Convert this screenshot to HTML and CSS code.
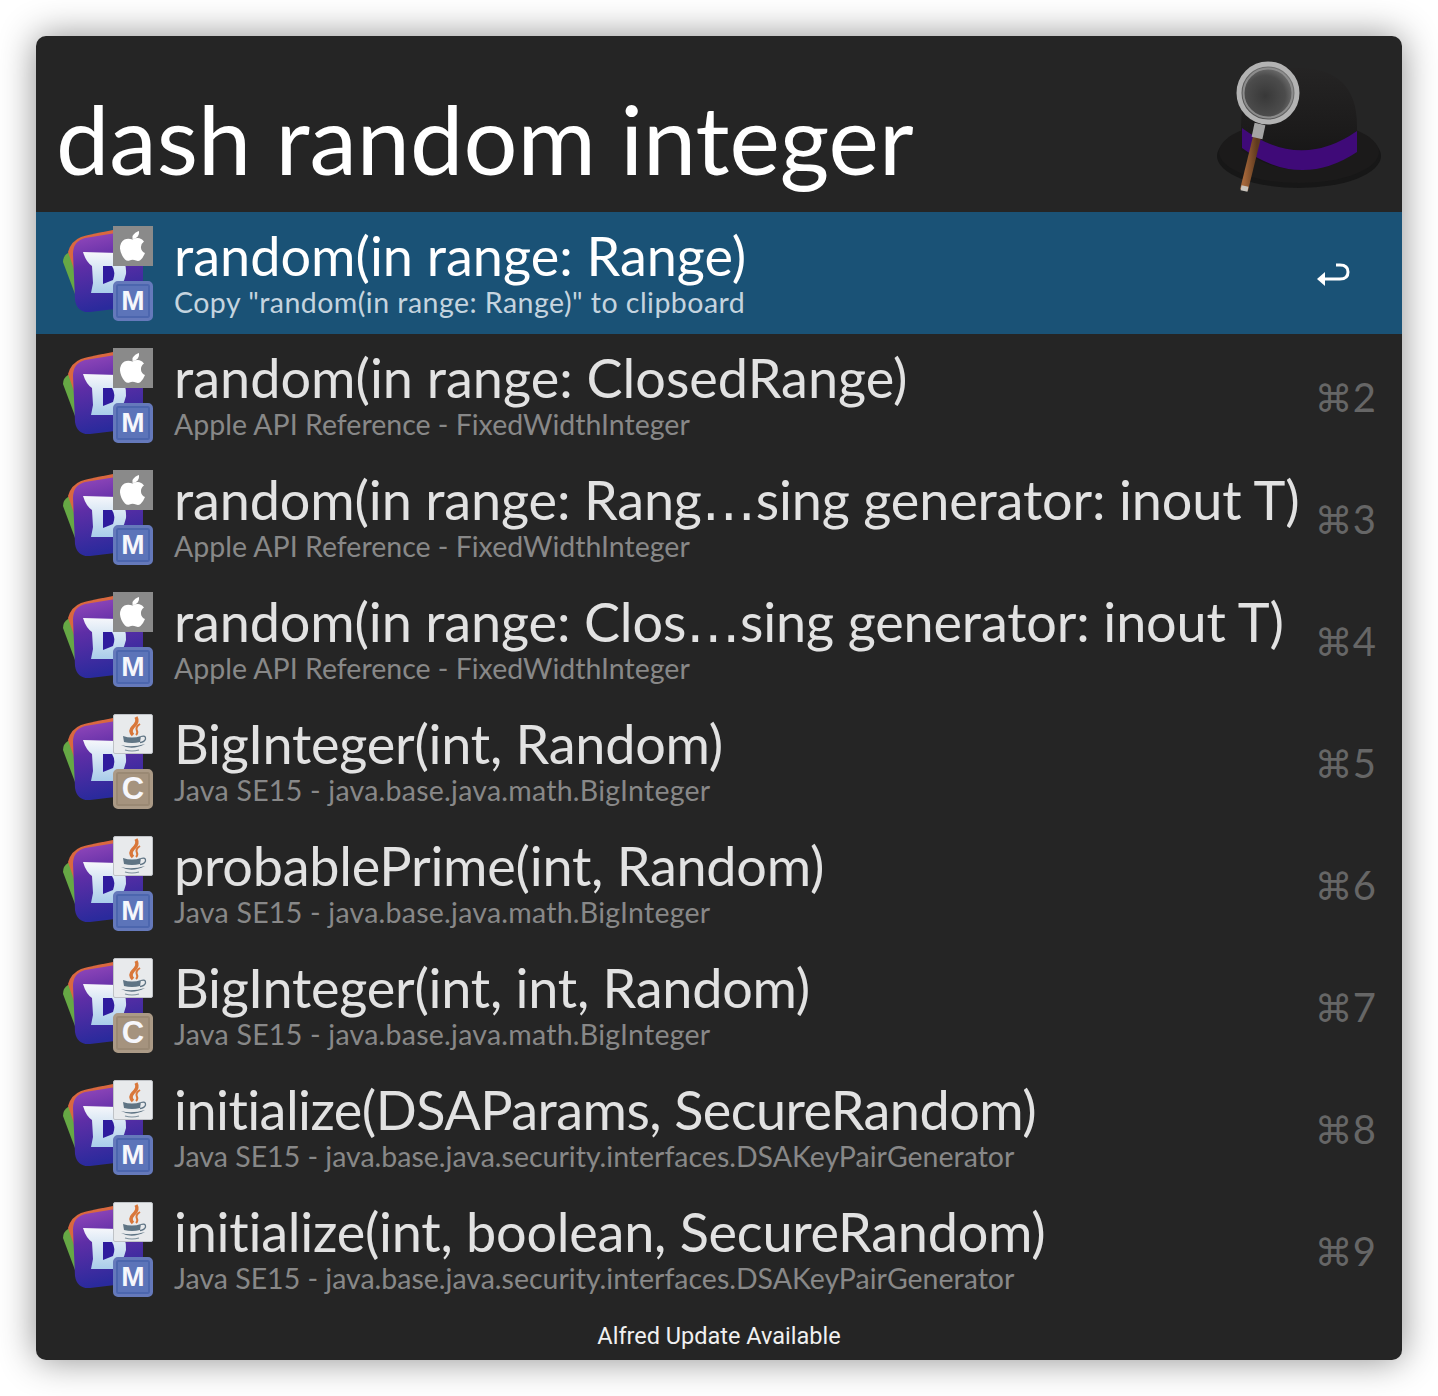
FILE: index.html
```html
<html>
  <head>
    <title>Alfred</title>
    <link rel="stylesheet" href="styles.css">
  </head>
  <body>
    <svg class="defs" width="0" height="0">
      <defs>
        <linearGradient id="dashBody" x1="0" y1="0" x2="0.2" y2="1">
          <stop offset="0" stop-color="#9a4bbd" />
          <stop offset="0.45" stop-color="#5e2ea6" />
          <stop offset="1" stop-color="#2a2a9c" />
        </linearGradient>
        <linearGradient id="dashLetter" x1="0" y1="0" x2="0" y2="1">
          <stop offset="0" stop-color="#f6f7fb" />
          <stop offset="1" stop-color="#a9cdea" />
        </linearGradient>
        <linearGradient id="crown" x1="0" y1="0" x2="0" y2="1">
          <stop offset="0" stop-color="#252424" />
          <stop offset="0.6" stop-color="#1c1b1b" />
          <stop offset="1" stop-color="#141414" />
        </linearGradient>
        <linearGradient id="stick" x1="0" y1="0" x2="1" y2="0">
          <stop offset="0" stop-color="#a5673a" />
          <stop offset="1" stop-color="#5f3a1e" />
        </linearGradient>
        <radialGradient id="lens" cx="0.45" cy="0.55" r="0.6">
          <stop offset="0" stop-color="#383838" />
          <stop offset="0.6" stop-color="#4c4c4c" />
          <stop offset="1" stop-color="#808080" />
        </radialGradient>
        <symbol id="dash" viewBox="0 0 96 96">
          <path d="M3 40 Q3 34 8 31 L20 26 L26 78 Q18 78 15 72 Z" fill="#66a845" />
          <path d="M8 30 Q11 19 21 15 Q27 13 53 8 L60 30 L15 50 Z" fill="#d9683f" />
          <path d="M13 32 Q13 19 25 16 L68 9 Q83 7 83 20 L83 74 Q83 85 72 85 L30 90 Q17 91 15 78 Z" fill="url(#dashBody)" />
          <path d="M23 30 L58 31 Q67 40 66 52 Q63 66 53 71 L31 71 L33 61 L32 44 Q26 40 23 30 Z" fill="url(#dashLetter)" />
          <path d="M43 44 L52 44 Q56 50 53 58 L43 62 Z" fill="#2f1c9e" />
        </symbol>
        <symbol id="badgeApple" viewBox="0 0 40 40">
          <rect width="40" height="40" fill="#8a8a8a" />
          <path d="M19.5 10 Q22 6 26 5 Q26.5 9 23.5 11.5 Q21.5 13 19.5 13 Z" fill="#fff" />
          <path d="M19.5 13.5 Q23 11.5 26.5 12.2 Q29.5 13 31 15.5 Q27.5 18 28 22 Q28.5 25.5 32 27 Q30 32 27.5 34 Q25.5 35.5 23 34.5 Q19.5 33.2 16.5 34.5 Q14 35.5 12 33.5 Q7.5 28.5 7 22.5 Q7 16 11.5 13.5 Q15 11.8 19.5 13.5 Z" fill="#fff" />
        </symbol>
        <symbol id="badgeJava" viewBox="0 0 40 40">
          <rect x="0.5" y="0.5" width="39" height="39" rx="1.5" fill="#e8eaec" stroke="#bfc2c6" />
          <path d="M23 3 Q26 8 20 13 Q16 17 20 21" fill="none" stroke="#d9773a" stroke-width="3.4" />
          <path d="M27 10 Q22 13 24 17 Q25 19 23 21" fill="none" stroke="#d9773a" stroke-width="2" />
          <path d="M10 22 Q19 25 28 22 L27 28 Q19 30 11 28 Z" fill="#5f7484" />
          <path d="M28 22.5 Q33 21 32.5 25 Q31.5 28 27 28.5" fill="none" stroke="#5f7484" stroke-width="1.3" />
          <path d="M8 31 Q19 34 32 30 Q19 37 8 31 Z" fill="#5f7484" />
          <path d="M12 36 Q19 38 26 36" fill="none" stroke="#7d8f9c" stroke-width="1.2" />
        </symbol>
      </defs>
    </svg>

    <div class="window">
      <div class="search">
        <div class="query">dash random integer</div>
        <svg class="hat" viewBox="0 0 200 150">
          <ellipse cx="99" cy="106" rx="82" ry="32" fill="#171717" />
          <ellipse cx="99" cy="102" rx="80" ry="31" fill="#1b1a1a" />
          <path d="M41 78 Q40 18 98 18 Q157 18 157 76 L157 100 Q100 140 41 100 Z" fill="url(#crown)" />
          <path d="M42 78 Q100 121 157 81 L157 102 Q100 140 42 98 Z" fill="#3f0a78" />
          <path d="M57 87 L44 140" stroke="url(#stick)" stroke-width="8" />
          <path d="M45 136 L44 141" stroke="#c9c4bd" stroke-width="7" />
          <path d="M60 74 L57 88" stroke="#a4a4a4" stroke-width="11" />
          <circle cx="68" cy="43" r="28" fill="url(#lens)" />
          <circle cx="68" cy="43" r="29" fill="none" stroke="#b3b3b3" stroke-width="5" />
          <circle cx="68" cy="43" r="24.5" fill="none" stroke="#8c8c8c" stroke-width="2" />
        </svg>
      </div>

      <div class="row selected">
        <div class="icon">
          <svg class="dash"><use href="#dash" /></svg>
          <svg class="badge top"><use href="#badgeApple" /></svg>
          <span class="badge bottom method">M</span>
        </div>
        <div class="texts">
          <div class="name">random(in range: Range)</div>
          <div class="sub">Copy "random(in range: Range)" to clipboard</div>
        </div>
        <svg class="enter" viewBox="0 0 36 30">
          <path d="M20 3 H24 Q32 3 32 10 Q32 17 24 17 H7" fill="none" stroke="#fff" stroke-width="3" />
          <path d="M1 17 L9 10 V24 Z" fill="#fff" />
        </svg>
      </div>

      <div class="row">
        <div class="icon">
          <svg class="dash"><use href="#dash" /></svg>
          <svg class="badge top"><use href="#badgeApple" /></svg>
          <span class="badge bottom method">M</span>
        </div>
        <div class="texts">
          <div class="name">random(in range: ClosedRange)</div>
          <div class="sub">Apple API Reference - FixedWidthInteger</div>
        </div>
        <div class="shortcut"><span class="cmd">⌘</span>2</div>
      </div>

      <div class="row">
        <div class="icon">
          <svg class="dash"><use href="#dash" /></svg>
          <svg class="badge top"><use href="#badgeApple" /></svg>
          <span class="badge bottom method">M</span>
        </div>
        <div class="texts">
          <div class="name clipped">random(in range: Rang<span class="dots">…</span>sing generator: inout T)</div>
          <div class="sub">Apple API Reference - FixedWidthInteger</div>
        </div>
        <div class="shortcut"><span class="cmd">⌘</span>3</div>
      </div>

      <div class="row">
        <div class="icon">
          <svg class="dash"><use href="#dash" /></svg>
          <svg class="badge top"><use href="#badgeApple" /></svg>
          <span class="badge bottom method">M</span>
        </div>
        <div class="texts">
          <div class="name clipped">random(in range: Clos<span class="dots">…</span>sing generator: inout T)</div>
          <div class="sub">Apple API Reference - FixedWidthInteger</div>
        </div>
        <div class="shortcut"><span class="cmd">⌘</span>4</div>
      </div>

      <div class="row java">
        <div class="icon">
          <svg class="dash"><use href="#dash" /></svg>
          <svg class="badge top"><use href="#badgeJava" /></svg>
          <span class="badge bottom ctor">C</span>
        </div>
        <div class="texts">
          <div class="name">BigInteger(int, Random)</div>
          <div class="sub wide">Java SE15 - java.base.java.math.BigInteger</div>
        </div>
        <div class="shortcut"><span class="cmd">⌘</span>5</div>
      </div>

      <div class="row java">
        <div class="icon">
          <svg class="dash"><use href="#dash" /></svg>
          <svg class="badge top"><use href="#badgeJava" /></svg>
          <span class="badge bottom method">M</span>
        </div>
        <div class="texts">
          <div class="name">probablePrime(int, Random)</div>
          <div class="sub wide">Java SE15 - java.base.java.math.BigInteger</div>
        </div>
        <div class="shortcut"><span class="cmd">⌘</span>6</div>
      </div>

      <div class="row java">
        <div class="icon">
          <svg class="dash"><use href="#dash" /></svg>
          <svg class="badge top"><use href="#badgeJava" /></svg>
          <span class="badge bottom ctor">C</span>
        </div>
        <div class="texts">
          <div class="name">BigInteger(int, int, Random)</div>
          <div class="sub wide">Java SE15 - java.base.java.math.BigInteger</div>
        </div>
        <div class="shortcut"><span class="cmd">⌘</span>7</div>
      </div>

      <div class="row java">
        <div class="icon">
          <svg class="dash"><use href="#dash" /></svg>
          <svg class="badge top"><use href="#badgeJava" /></svg>
          <span class="badge bottom method">M</span>
        </div>
        <div class="texts">
          <div class="name tight">initialize(DSAParams, SecureRandom)</div>
          <div class="sub">Java SE15 - java.base.java.security.interfaces.DSAKeyPairGenerator</div>
        </div>
        <div class="shortcut"><span class="cmd">⌘</span>8</div>
      </div>

      <div class="row java">
        <div class="icon">
          <svg class="dash"><use href="#dash" /></svg>
          <svg class="badge top"><use href="#badgeJava" /></svg>
          <span class="badge bottom method">M</span>
        </div>
        <div class="texts">
          <div class="name">initialize(int, boolean, SecureRandom)</div>
          <div class="sub">Java SE15 - java.base.java.security.interfaces.DSAKeyPairGenerator</div>
        </div>
        <div class="shortcut"><span class="cmd">⌘</span>9</div>
      </div>

      <div class="footer">Alfred Update Available</div>
    </div>
  </body>
</html>
```

FILE: styles.css
```css
html,
body {
  margin: 0;
  background: #ffffff;
}

body {
  padding: 36px;
  font-family: "Lato", "Open Sans", sans-serif;
}

.defs {
  position: absolute;
}

.window {
  width: 1366px;
  height: 1324px;
  background: #252525;
  border-radius: 10px;
  box-shadow: 0 0 36px rgba(0, 0, 0, 0.45);
  overflow: hidden;
}

.search {
  height: 176px;
  display: flex;
  justify-content: space-between;
  padding: 14px 2px 0 20px;
  box-sizing: border-box;
}

.query {
  font-size: 95.3px;
  line-height: 176px;
  margin-top: 0;
  color: #ffffff;
  white-space: nowrap;
}

.hat {
  width: 200px;
  height: 150px;
}

.row {
  height: 122px;
  display: flex;
  align-items: center;
  padding: 0 26px 0 24px;
  box-sizing: border-box;
  color: #e2e2e2;
}

.selected {
  background: #1a5276;
  color: #ffffff;
}

.icon {
  position: relative;
  width: 96px;
  height: 96px;
  flex: none;
}

.dash {
  width: 96px;
  height: 96px;
  margin-top: -3px;
}

.badge {
  position: absolute;
  left: 53px;
  width: 40px;
  height: 40px;
}

.badge.top {
  top: 1px;
}

.badge.bottom {
  top: 56px;
  box-sizing: border-box;
  border-radius: 5px;
  border-width: 3px;
  border-style: solid;
  text-align: center;
  font-size: 28px;
  font-weight: bold;
  line-height: 34px;
  color: #f6f7fc;
  font-family: "Liberation Sans", sans-serif;
}

.badge.method {
  background: #5c74b9;
  border-color: #6579bb;
  box-shadow: inset 0 0 0 2px #4c66ae;
}

.badge.ctor {
  background: #a5937e;
  border-color: #ab9a86;
  box-shadow: inset 0 0 0 2px #9a8974;
  font-size: 31px;
}

.texts {
  flex: 1;
  min-width: 0;
  margin-left: 18px;
  margin-top: 4px;
}

.name {
  font-size: 54px;
  line-height: 62px;
  height: 62px;
  margin-top: -8px;
  white-space: nowrap;
}

.clipped {
  letter-spacing: -0.15px;
}

.dots {
  font-family: "DejaVu Sans", sans-serif;
  line-height: 1;
}

.java .name {
  letter-spacing: -0.24px;
}

.java .tight {
  letter-spacing: -0.55px;
}

.sub {
  font-size: 28.5px;
  line-height: 30px;
  color: #888888;
  white-space: nowrap;
}

.wide {
  letter-spacing: 0.25px;
}

.selected .sub {
  color: #c5d4df;
  letter-spacing: 0.47px;
}

.shortcut {
  font-size: 40px;
  color: #666666;
  white-space: nowrap;
  margin-top: 4px;
}

.cmd {
  font-family: "DejaVu Sans", sans-serif;
  font-size: 38px;
}

.enter {
  width: 36px;
  height: 30px;
  margin-right: 24px;
  margin-top: 8px;
}

.footer {
  height: 50px;
  line-height: 52px;
  text-align: center;
  font-family: "Roboto", "Liberation Sans", sans-serif;
  font-size: 23.5px;
  color: #f0f0f0;
}
```
